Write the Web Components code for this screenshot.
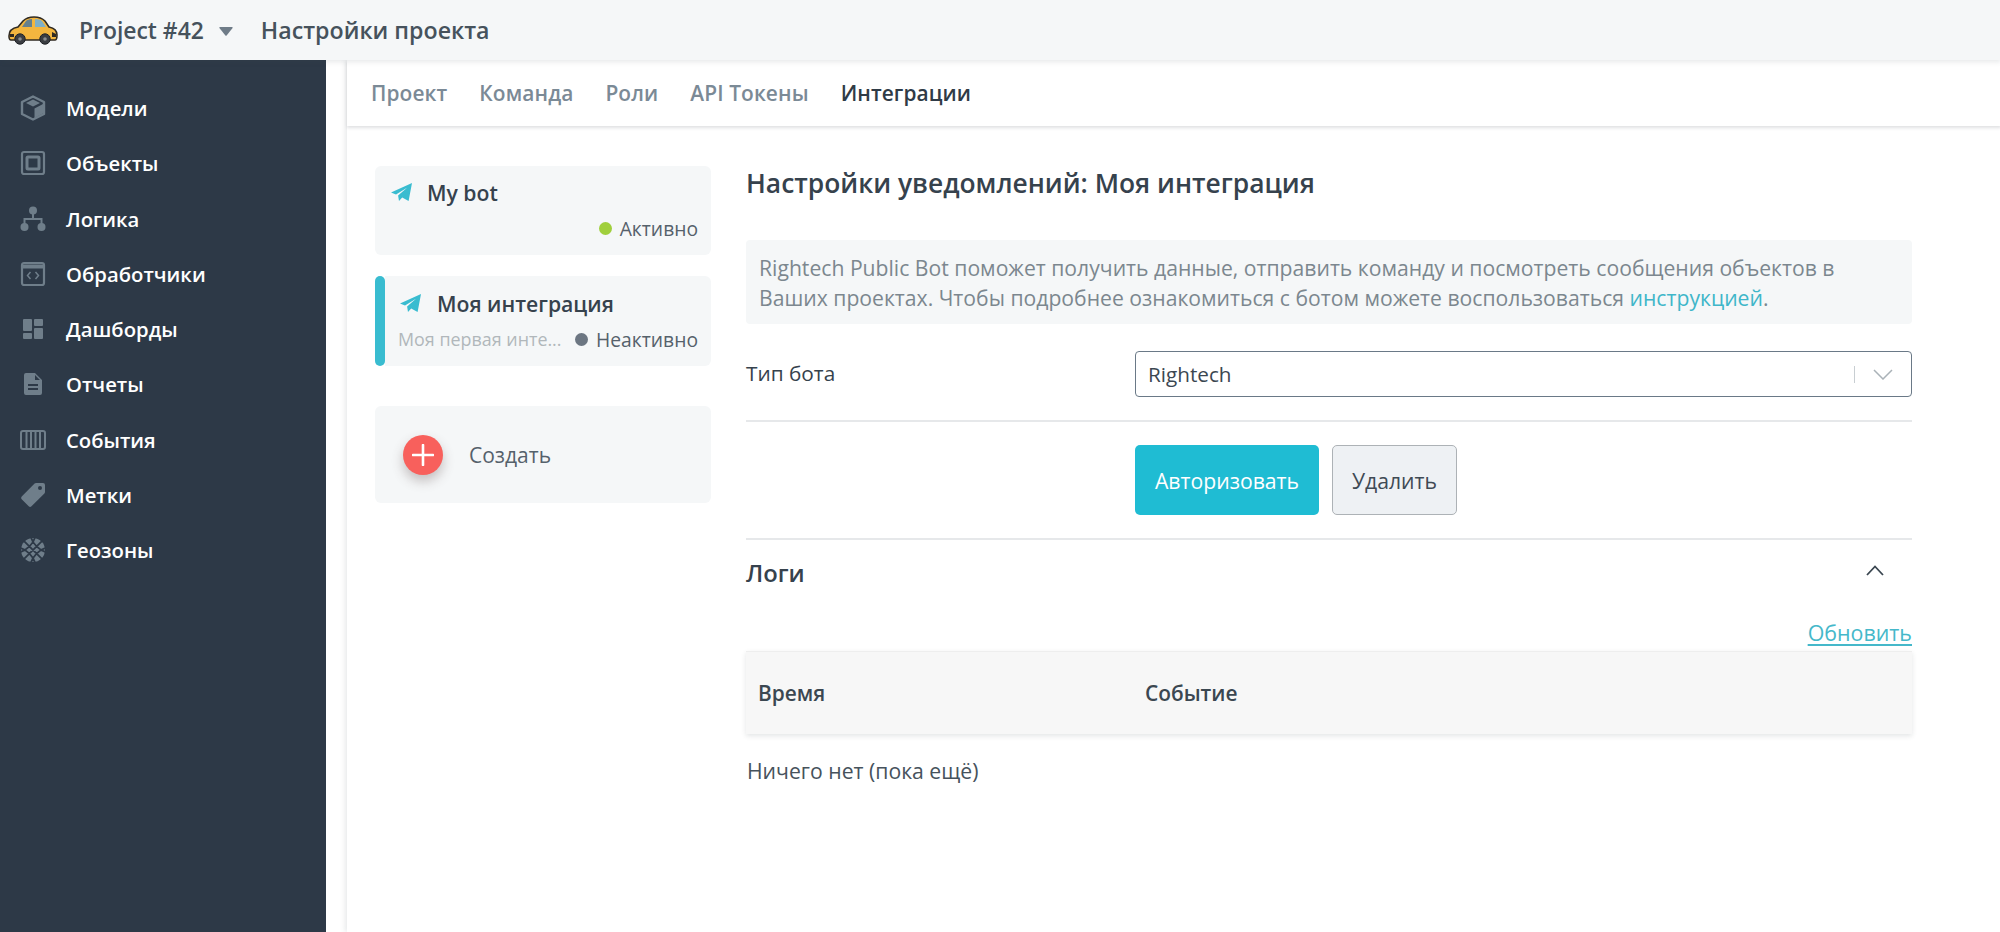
<!DOCTYPE html>
<html lang="ru"><head><meta charset="utf-8"><title>Настройки проекта</title>
<style>
html,body{margin:0;padding:0;height:100%;background:#fff}
body{font-family:"Open Sans","Noto Sans",sans-serif;color:#2f3b46;overflow:hidden}
rt-body a{color:#3fb6c9;text-decoration:none}
</style></head><body>
<template id="t-shell"><style>
:host{display:grid;grid-template-columns:326px 1fr;grid-template-rows:60px 1fr;height:932px;width:2000px}
::slotted([slot=top]){grid-column:1/3}
</style><slot name="top"></slot><slot name="side"></slot><slot name="main"></slot></template>

<template id="t-top"><style>
:host{display:flex;align-items:center;background:#f5f7f8;height:60px;box-shadow:0 2px 5px rgba(60,70,80,.12);position:relative;z-index:2;padding-left:8px;box-sizing:border-box}
.p{font-size:22.9px;font-weight:600;color:#46525c;margin-left:21px;white-space:nowrap}
.c{margin:2px 0 0 15px;width:14px;height:9px}
.t{font-size:23.2px;font-weight:600;color:#46525c;margin-left:28px;white-space:nowrap}
</style><slot name="logo"></slot><span class="p"><slot name="project"></slot></span>
<svg class="c" viewBox="0 0 14 9"><path d="M1 0h12q1 0 .6 1L7.6 8.4q-.6.6-1.2 0L.4 1Q0 0 1 0z" fill="#6f7c88"/></svg>
<span class="t"><slot name="title"></slot></span></template>

<template id="t-side"><style>
:host{display:block;background:#2d3947;padding-top:20.5px;height:872px;box-sizing:border-box}
</style><slot></slot></template>

<template id="t-nav"><style>
:host{display:flex;align-items:center;height:55.25px;padding-left:20px;box-sizing:border-box;color:#fff;font-size:20.3px;font-weight:600;white-space:nowrap}
.i{width:26px;height:26px;margin-right:20px;display:flex}
</style><span class="i"><slot name="icon"></slot></span><slot></slot></template>

<template id="t-main"><style>
:host{display:block;margin-left:21px;box-shadow:-2px 0 5px rgba(60,70,80,.12);height:872px;background:#fff}
.b{display:flex;padding:40px 89px 0 28px;gap:35px}
::slotted([slot=list]){width:336px;flex:none}
::slotted([slot=body]){flex:1;min-width:0}
</style><slot name="tabs"></slot><div class="b"><slot name="list"></slot><slot name="body"></slot></div></template>

<template id="t-tabs"><style>
:host{display:flex;gap:32px;height:66px;align-items:center;padding:0 0 1px 24px;box-sizing:border-box;box-shadow:0 2px 3px rgba(60,70,80,.16);font-size:20.9px;font-weight:600;color:#7b8a96;letter-spacing:.1px}
::slotted(.on){color:#2f3b46}
</style><slot></slot></template>

<template id="t-list"><style>
:host{display:flex;flex-direction:column}
</style><slot></slot></template>

<template id="t-card"><style>
:host{display:block;position:relative;background:#f5f7f8;border-radius:6px;box-sizing:border-box;height:89px;margin-bottom:21px;padding:10px 13px 0 16px}
:host([active]){height:90px;margin-bottom:40px;margin-left:10px;padding-left:13px;padding-top:11px;border-radius:0 6px 6px 0}
:host([active])::before{content:"";position:absolute;left:-10px;top:0;bottom:0;width:10px;border-radius:5px;background:#39bcd0}
.h{display:flex;align-items:center;height:32px;font-size:21.2px;font-weight:600;color:#36424d;white-space:nowrap}
svg{width:21px;height:18px;margin-right:15px;flex:none}
:host([active]) svg{margin-left:2px;margin-right:16px}
.f{display:flex;align-items:center;justify-content:flex-end;margin-top:5px;height:30px;font-size:19.3px;color:#55616b;white-space:nowrap}
.d{flex:1;color:#b1b7bb;min-width:0;font-size:17.9px}
.o{width:13px;height:13px;border-radius:50%;margin-right:8px;background:var(--dot,#a0cf3c)}
</style><div class="h"><svg viewBox="0 0 21 18"><path d="M0 9.6 21 0 17.6 18l-6.4-3.6L8 18l-.9-5.6L16 4.8 5 11.6z" fill="#39bcd0"/></svg><slot name="name"></slot></div>
<div class="f"><span class="d"><slot name="desc"></slot></span><span class="o"></span><slot name="status"></slot></div></template>

<template id="t-create"><style>
:host{display:flex;align-items:center;height:97px;background:#f5f7f8;border-radius:6px;padding-left:28px;box-sizing:border-box;font-size:21px;color:#55616b}
.c{width:40px;height:40px;border-radius:50%;background:#f8605c;box-shadow:0 6px 12px rgba(80,60,60,.3);margin-right:26px;display:flex;align-items:center;justify-content:center}
</style><span class="c"><svg width="22" height="22" viewBox="0 0 22 22"><path d="M11 1v20M1 11h20" stroke="#fff" stroke-width="2.6" stroke-linecap="round"/></svg></span><slot></slot></template>

<template id="t-body"><style>
:host{display:block}
h2{margin:0 0 40px;font-size:26.4px;line-height:34px;font-weight:600;color:#36424d;white-space:nowrap}
.info{background:#f5f7f8;border-radius:4px;padding:13px 13px 11px;font-size:21.17px;line-height:30px;color:#7c878f;white-space:nowrap}
.row{display:flex;align-items:center;margin-top:27px}
.l{width:389px;font-size:20.8px;line-height:30px;color:#36424d;margin-top:-2px}
.s{flex:1;height:46px;border:1.5px solid #6a7987;border-radius:4px;box-sizing:border-box;display:flex;align-items:center;padding:0 18px 0 12px;font-size:20.7px;color:#3b4751}
.s span{flex:1;line-height:30px}.s i{width:1px;height:17px;background:#c8ced2;margin-right:18px}
hr{border:0;height:2px;background:#e6e8ea;margin:23px 0}
hr.z{margin-bottom:0}
.btns{display:flex;padding-left:389px;gap:13px}
.bt{height:70px;display:flex;align-items:center;justify-content:center;box-sizing:border-box;border-radius:5px;font-size:21.2px}
.p{width:184px;background:#1fbcd3;color:#fff}
.g{width:125px;background:#eef1f4;border:1.5px solid #adb2b6;color:#3f4a54}
.lg{display:flex;align-items:center;justify-content:space-between;height:66px;padding-right:28px;font-size:23.8px;font-weight:600;color:#36424d}
.lg svg{margin-bottom:6px}
.up{display:flex;justify-content:flex-end;margin-top:14px;height:26px;line-height:26px;font-size:21.4px}
.up a{color:#45b8ca;text-decoration:underline;text-underline-offset:3px}
.tb{display:flex;margin-top:5px;height:83px;align-items:center;background:#f7f7f7;box-shadow:0 2px 5px rgba(60,70,80,.14);border-top:1px solid #eee;box-sizing:border-box;font-size:20.9px;font-weight:600;color:#3b4751;width:1166px}
.tb span:first-child{width:399px;padding-left:12px;box-sizing:border-box}
.e{margin:21.5px 0 0 1px;line-height:30px;font-size:21.2px;color:#46525c}
</style>
<h2><slot name="title"></slot></h2>
<div class="info"><slot name="info"></slot></div>
<div class="row"><span class="l">Тип бота</span><div class="s"><span>Rightech</span><i></i><svg width="20" height="11" viewBox="0 0 20 11"><path d="M1 1l9 9 9-9" fill="none" stroke="#aab2b8" stroke-width="1.5"/></svg></div></div>
<hr>
<div class="btns"><div class="bt p">Авторизовать</div><div class="bt g">Удалить</div></div>
<hr class="z">
<div class="lg"><span>Логи</span><svg width="18" height="11" viewBox="0 0 18 11"><path d="M1 10l8-8.5 8 8.5" fill="none" stroke="#3a4650" stroke-width="1.8"/></svg></div>
<div class="up"><a>Обновить</a></div>
<div class="tb"><span>Время</span><span>Событие</span></div>
<div class="e">Ничего нет (пока ещё)</div>
</template>

<rt-shell>
<rt-top slot="top">
<svg slot="logo" width="50" height="30" viewBox="0 0 50 30">
<path d="M1 21c0-5 3-8 9-9l5-6c3-3 6-4 11-4 5 0 8 1 11 4l4 6c5 1 8 4 8 8 0 3 0 5-2 5H3c-2 0-2-2-2-4z" fill="#f3b63f" stroke="#2f2a22" stroke-width="1.6"/>
<path d="M14 12l4-6c1-1 3-2 6-2v8z" fill="#65808e"/><path d="M27 4c4 0 6 1 7 2l4 6H27z" fill="#7fb0c8"/>
<path d="M2 19h4v3H2zM44 17l4 2v3h-4z" fill="#2f2a22"/>
<circle cx="12" cy="24" r="5.2" fill="#3a3d42" stroke="#1f2226" stroke-width="1"/><circle cx="12" cy="24" r="1.8" fill="#8a8d90"/>
<circle cx="37" cy="24" r="5.2" fill="#3a3d42" stroke="#1f2226" stroke-width="1"/><circle cx="37" cy="24" r="1.8" fill="#8a8d90"/>
</svg>
<span slot="project">Project #42</span><span slot="title">Настройки проекта</span>
</rt-top>
<rt-side slot="side">
<rt-nav><svg slot="icon" width="26" height="26" viewBox="0 0 26 26" fill="none" stroke="#6f7e8a"><path d="M13 1.5 24 7v12l-11 5.5L2 19V7z" stroke-width="2.4" stroke-linejoin="round"/><path d="M14.5 13.5 23 9v9.5l-8.5 4.5z" fill="#6f7e8a" stroke="none"/><path d="M13 4.5 20 8l-7 3.5L6 8z" fill="#6f7e8a" stroke="none"/></svg>Модели</rt-nav>
<rt-nav><svg slot="icon" width="26" height="26" viewBox="0 0 26 26" fill="none"><rect x="2" y="2" width="22" height="22" rx="2" stroke="#6f7e8a" stroke-width="2.2"/><rect x="7" y="7" width="12" height="12" rx="1" stroke="#6f7e8a" stroke-width="3"/></svg>Объекты</rt-nav>
<rt-nav><svg slot="icon" width="26" height="26" viewBox="0 0 26 26" fill="#6f7e8a"><circle cx="13" cy="4.5" r="4"/><circle cx="4.5" cy="21" r="4"/><circle cx="21.5" cy="21" r="4"/><path d="M12 6h2v6h8.5v6h-2v-4h-15v4h-2v-6H12z"/></svg>Логика</rt-nav>
<rt-nav><svg slot="icon" width="26" height="26" viewBox="0 0 26 26" fill="none" stroke="#6f7e8a"><rect x="2" y="2" width="22" height="22" rx="2" stroke-width="2.2"/><path d="M2 5.5h22" stroke-width="4"/><path d="M10.5 11 7.5 14.5l3 3.5M15.5 11l3 3.5-3 3.5" stroke-width="1.5"/></svg>Обработчики</rt-nav>
<rt-nav><svg slot="icon" width="26" height="26" viewBox="0 0 26 26" fill="#6f7e8a"><rect x="3" y="3" width="9" height="12" rx="1"/><rect x="14" y="3" width="9" height="7" rx="1"/><rect x="3" y="17" width="9" height="6" rx="1"/><rect x="14" y="12" width="9" height="11" rx="1"/></svg>Дашборды</rt-nav>
<rt-nav><svg slot="icon" width="26" height="26" viewBox="0 0 26 26" fill="#6f7e8a"><path fill-rule="evenodd" d="M6 2h9l7 7v13a2 2 0 0 1-2 2H6a2 2 0 0 1-2-2V4a2 2 0 0 1 2-2zm9 2v5h5zM8 13v2h10v-2zm0 4v2h10v-2z"/></svg>Отчеты</rt-nav>
<rt-nav><svg slot="icon" width="26" height="26" viewBox="0 0 26 26" fill="none" stroke="#6f7e8a"><rect x="1" y="4" width="24" height="18" rx="2" stroke-width="2"/><path d="M6.5 4v18M11 4v18M15.5 4v18M20 4v18" stroke-width="2"/></svg>События</rt-nav>
<rt-nav><svg slot="icon" width="26" height="26" viewBox="0 0 26 26" fill="#6f7e8a"><path fill-rule="evenodd" d="M16 1h7a2 2 0 0 1 2 2v7a2 2 0 0 1-.6 1.4L11.5 24.3a2 2 0 0 1-2.8 0L1.7 17.3a2 2 0 0 1 0-2.8L14.6 1.6A2 2 0 0 1 16 1zm4 3a2 2 0 1 0 0 4 2 2 0 0 0 0-4z"/></svg>Метки</rt-nav>
<rt-nav><svg slot="icon" width="26" height="26" viewBox="0 0 26 26"><circle cx="13" cy="13" r="12" fill="#6f7e8a"/><g fill="none" stroke="#2d3947" stroke-width="1.8" transform="rotate(45 13 13)"><path d="M13 0v26M0 13h26M5 1.5c4 7 4 16 0 23M21 1.5c-4 7-4 16 0 23M1.5 5c7 4 16 4 23 0M1.5 21c7-4 16-4 23 0"/></g></svg>Геозоны</rt-nav>
</rt-side>
<rt-main slot="main">
<rt-tabs slot="tabs"><span>Проект</span><span>Команда</span><span>Роли</span><span>API Токены</span><span class="on">Интеграции</span></rt-tabs>
<rt-list slot="list">
<rt-card><span slot="name">My bot</span><span slot="status">Активно</span></rt-card>
<rt-card active style="--dot:#6c7682"><span slot="name">Моя интеграция</span><span slot="desc">Моя первая инте...</span><span slot="status">Неактивно</span></rt-card>
<rt-create>Создать</rt-create>
</rt-list>
<rt-body slot="body"><span slot="title">Настройки уведомлений: Моя интеграция</span>
<span slot="info">Rightech Public Bot поможет получить данные, отправить команду и посмотреть сообщения объектов в<br>Ваших проектах. Чтобы подробнее ознакомиться с ботом можете воспользоваться <a>инструкцией</a>.</span>
</rt-body>
</rt-main>
</rt-shell>
<script>
const def=(n,t)=>customElements.define(n,class extends HTMLElement{constructor(){super();this.attachShadow({mode:"open"}).appendChild(document.getElementById(t).content.cloneNode(true))}});
[["rt-shell","t-shell"],["rt-top","t-top"],["rt-side","t-side"],["rt-nav","t-nav"],["rt-main","t-main"],["rt-tabs","t-tabs"],["rt-list","t-list"],["rt-card","t-card"],["rt-create","t-create"],["rt-body","t-body"]].forEach(a=>def(...a));
</script>
</body></html>
